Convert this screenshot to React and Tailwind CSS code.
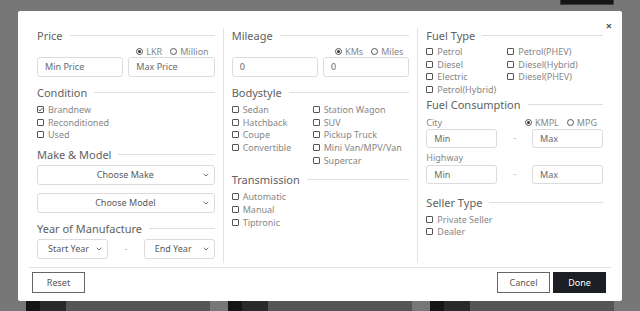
import React from 'react';

const font = { fontFamily: '"Noto Sans", "Open Sans", sans-serif' };

const Heading = ({ children }) => (
  <div className="flex items-center h-[14px]">
    <span className="text-[11px] leading-none text-[#616161] whitespace-nowrap">{children}</span>
    <div className="flex-1 h-px bg-[#dedede] ml-[7px]" />
  </div>
);

const Box = ({ checked }) => (
  <span className="inline-flex items-center justify-center w-[7px] h-[7px] border border-[#555] rounded-[1px] mr-[4px] shrink-0">
    {checked && (
      <svg width="5" height="5" viewBox="0 0 5 5">
        <path d="M0.6 2.6 L2 3.9 L4.4 1" fill="none" stroke="#444" strokeWidth="0.9" />
      </svg>
    )}
  </span>
);

const Check = ({ label, checked }) => (
  <div className="flex items-center h-[12.7px] text-[9px] leading-none text-[#878787] whitespace-nowrap">
    <Box checked={checked} />
    {label}
  </div>
);

const Radio = ({ label, on }) => (
  <span className="flex items-center ml-[8px]">
    <span className="inline-flex items-center justify-center w-[7px] h-[7px] rounded-full border border-[#555] mr-[3px]">
      {on && <span className="w-[3px] h-[3px] rounded-full bg-[#333]" />}
    </span>
    {label}
  </span>
);

const Radios = ({ a, b, className = '' }) => (
  <div className={`flex justify-end items-center h-[10px] pr-[6px] text-[9px] leading-none text-[#878787] ${className}`}>
    <Radio label={a} on />
    <Radio label={b} />
  </div>
);

const Input = ({ text, className = '' }) => (
  <div className={`flex items-center border border-[#dcdcdc] rounded-[3px] pl-[7px] text-[9px] text-[#6a6a6a] ${className}`}>
    {text}
  </div>
);

const Chevron = () => (
  <svg width="6" height="4" viewBox="0 0 6 4" className="shrink-0">
    <path d="M0.7 0.8 L3 3 L5.3 0.8" fill="none" stroke="#666" strokeWidth="0.9" />
  </svg>
);

const Select = ({ text, center, className = '' }) => (
  <div className={`flex items-center border border-[#dcdcdc] rounded-[3px] text-[9px] text-[#5a5a5a] pr-[5px] pl-[10px] ${className}`}>
    <span className={center ? 'flex-1 text-center' : 'flex-1'}>{text}</span>
    <Chevron />
  </div>
);

const Dash = () => (
  <div className="flex-1 flex justify-center text-[8px] text-[#aaa]">-</div>
);

export default function App() {
  return (
    <div className="relative w-[640px] h-[311px] bg-[#777777] overflow-hidden" style={font}>
      <div className="flex flex-col justify-between h-full">
        <div className="flex justify-end pr-[26px]">
          <div className="w-[54px] h-[5px] bg-[#161616] border border-[#3a3a3a] border-t-0" />
        </div>
        <div className="flex gap-[18px] pl-[26px] h-[10px]">
          {[0, 1, 2].map((i) => (
            <div key={i} className="flex w-[184px] bg-[#555]">
              <div className="w-[14px] bg-[#151515]" />
              <div className="w-[26px] bg-[#2a2a2a]" />
            </div>
          ))}
        </div>
      </div>

      <div className="absolute left-[18px] top-[11px] w-[604px] h-[290px] bg-white rounded-[2px]">
        <div className="absolute right-[10px] top-[9px] text-[11px] leading-none font-bold text-[#555]">×</div>

        <div className="flex pl-[11px] pr-[11px] pt-[17px]">
          {/* column 1 */}
          <div className="w-[194px] h-[235px] px-[8px] flex flex-col">
            <Heading>Price</Heading>
            <Radios a="LKR" b="Million" className="mt-[4px]" />
            <div className="flex gap-[5px] mt-[1px]">
              <Input text="Min Price" className="flex-1 h-[20px]" />
              <Input text="Max Price" className="flex-1 h-[20px]" />
            </div>
            <div className="mt-[8px]"><Heading>Condition</Heading></div>
            <div className="mt-[4px]">
              <Check label="Brandnew" checked />
              <Check label="Reconditioned" />
              <Check label="Used" />
            </div>
            <div className="mt-[6px]"><Heading>Make &amp; Model</Heading></div>
            <Select text="Choose Make" center className="h-[20px] mt-[4px]" />
            <Select text="Choose Model" center className="h-[20px] mt-[8px]" />
            <div className="mt-[8px]"><Heading>Year of Manufacture</Heading></div>
            <div className="flex items-center mt-[4px]">
              <Select text="Start Year" className="w-[71px] h-[20px]" />
              <Dash />
              <Select text="End Year" className="w-[71px] h-[20px]" />
            </div>
          </div>

          {/* column 2 */}
          <div className="w-[195px] h-[235px] px-[8px] flex flex-col border-l border-[#e3e3e3]">
            <Heading>Mileage</Heading>
            <Radios a="KMs" b="Miles" className="mt-[4px]" />
            <div className="flex gap-[5px] mt-[1px]">
              <Input text="0" className="flex-1 h-[20px]" />
              <Input text="0" className="flex-1 h-[20px]" />
            </div>
            <div className="mt-[8px]"><Heading>Bodystyle</Heading></div>
            <div className="grid grid-cols-[81px_1fr] mt-[4px]">
              <Check label="Sedan" />
              <Check label="Station Wagon" />
              <Check label="Hatchback" />
              <Check label="SUV" />
              <Check label="Coupe" />
              <Check label="Pickup Truck" />
              <Check label="Convertible" />
              <Check label="Mini Van/MPV/Van" />
              <div />
              <Check label="Supercar" />
            </div>
            <div className="mt-[6px]"><Heading>Transmission</Heading></div>
            <div className="mt-[4px]">
              <Check label="Automatic" />
              <Check label="Manual" />
              <Check label="Tiptronic" />
            </div>
          </div>

          {/* column 3 */}
          <div className="w-[194px] h-[235px] px-[8px] flex flex-col border-l border-[#e3e3e3]">
            <Heading>Fuel Type</Heading>
            <div className="grid grid-cols-[81px_1fr] mt-[3px]">
              <Check label="Petrol" />
              <Check label="Petrol(PHEV)" />
              <Check label="Diesel" />
              <Check label="Diesel(Hybrid)" />
              <Check label="Electric" />
              <Check label="Diesel(PHEV)" />
              <Check label="Petrol(Hybrid)" />
            </div>
            <div className="mt-[2px]"><Heading>Fuel Consumption</Heading></div>
            <div className="flex items-center justify-between h-[12px] mt-[5px]">
              <span className="text-[9px] text-[#878787]">City</span>
              <Radios a="KMPL" b="MPG" className="pr-[5px]" />
            </div>
            <div className="flex items-center">
              <Input text="Min" className="w-[71px] h-[19px]" />
              <Dash />
              <Input text="Max" className="w-[71px] h-[19px]" />
            </div>
            <div className="flex items-center h-[12px] mt-[4px] text-[9px] text-[#878787]">Highway</div>
            <div className="flex items-center mt-[1px]">
              <Input text="Min" className="w-[71px] h-[19px]" />
              <Dash />
              <Input text="Max" className="w-[71px] h-[19px]" />
            </div>
            <div className="mt-[12px]"><Heading>Seller Type</Heading></div>
            <div className="mt-[3px]">
              <Check label="Private Seller" />
              <Check label="Dealer" />
            </div>
          </div>
        </div>

        <div className="mx-[11px] mt-[4px] border-t border-[#e3e3e3] flex justify-between items-center pt-[4px] pl-[3px] pr-[5px]">
          <button className="w-[53px] h-[21px] border border-[#666] text-[9px] text-[#555]">Reset</button>
          <div className="flex gap-[3px]">
            <button className="w-[53px] h-[21px] border border-[#666] text-[9px] text-[#555]">Cancel</button>
            <button className="w-[53px] h-[21px] bg-[#1b1e22] text-[9px] text-white">Done</button>
          </div>
        </div>
      </div>
    </div>
  );
}
